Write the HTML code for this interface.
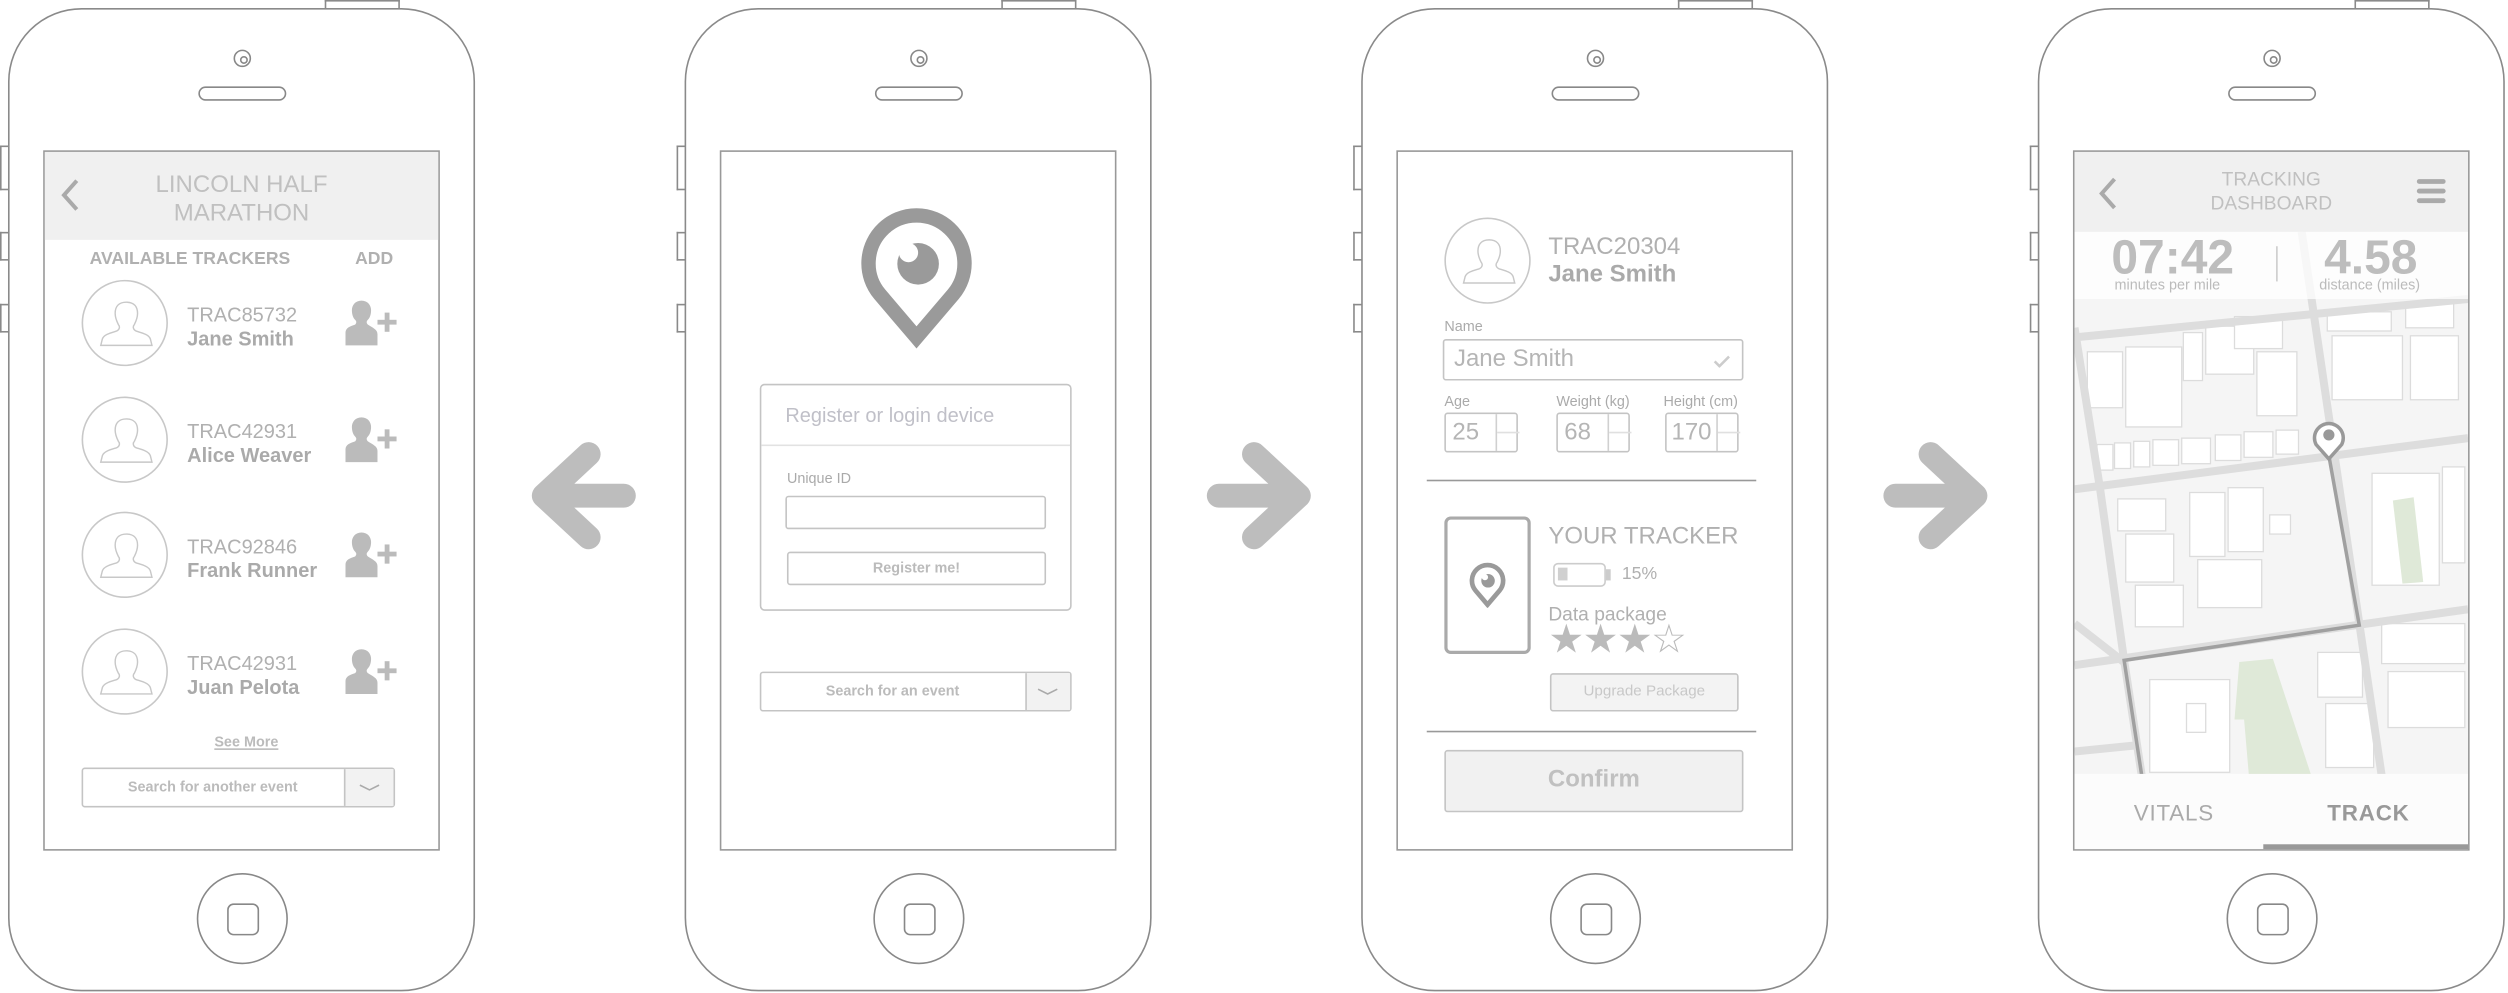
<!DOCTYPE html>
<html><head><meta charset="utf-8"><style>
*{margin:0;padding:0;box-sizing:border-box}
body{width:2508px;height:993px;overflow:hidden;background:#fff;font-family:"Liberation Sans",Arial,sans-serif}
#w{position:absolute;left:0;top:0;width:1568px;height:621px;transform:scale(1.5995,1.599);transform-origin:0 0}
.a{position:absolute}
.ph{position:absolute;top:0;width:300px;height:621px}
.body{position:absolute;left:5px;top:5px;width:292px;height:615px;border:1.5px solid #8a8a8a;border-radius:46px;background:#fff}
.sb{position:absolute;left:0;width:6px;border:1.2px solid #8a8a8a;border-right:none;background:#fff}
.tb{position:absolute;left:203px;top:0;width:47px;height:6px;border:1.2px solid #8a8a8a;border-bottom:none}
.cam{position:absolute;left:146px;top:31px;width:11px;height:11px;border:1.3px solid #888;border-radius:50%}
.cam:after{content:"";position:absolute;left:2.5px;top:2.5px;width:3.5px;height:3.5px;border:1.2px solid #888;border-radius:50%}
.spk{position:absolute;left:124px;top:54px;width:55px;height:9px;border:1.3px solid #888;border-radius:5px}
.home{position:absolute;left:123px;top:546px;width:57px;height:57px;border:1.5px solid #888;border-radius:50%}
.home:after{content:"";position:absolute;left:18px;top:18px;width:18px;height:18px;border:1.5px solid #888;border-radius:4px}
.scr{position:absolute;left:27px;top:94px;width:248px;height:438px;border:1.8px solid #999;background:#fff;overflow:hidden}
.g{color:#b5b5b5}
.av{position:absolute;width:54px;height:54px;border:1px solid #c8c8c8;border-radius:50%}
.box{position:absolute;border:1px solid #c4c4c4;border-radius:2px}
.spin{position:absolute;left:31px;top:0;width:14px;height:23px;border-left:1px solid #d0d0d0}
.spin:before{content:"";position:absolute;top:11px;left:0;width:14px;border-top:1px solid #e0e0e0}
</style></head><body><div id="w">

<svg width="0" height="0" style="position:absolute"><defs>
<symbol id="person" viewBox="0 0 54 54"><path d="M27 13c-5 0-7 3-7 7 0 3 1 5 2 7 1 1 1 3-1 4-3 1-8 2-9 5l-1 4h32l-1-4c-1-3-6-4-9-5-2-1-2-3-1-4 1-2 2-4 2-7 0-4-2-7-7-7z" fill="none" stroke="#c8c8c8" stroke-width="0.9"/></symbol>
<symbol id="adduser" viewBox="0 0 32 30"><path d="M10 1c-4 0-6 3-6 6 0 3 1 5 2 6 1 1 1 2 0 3-3 1-6 2-6 5v8h20v-7c0-3-3-4-6-6-1-1-1-2 0-3 1-1 2-3 2-6 0-3-2-6-6-6z" fill="#bbb"/><rect x="20" y="13" width="12" height="3" fill="#bbb"/><rect x="24.5" y="8.5" width="3" height="12" fill="#bbb"/></symbol>
<symbol id="pin" viewBox="0 0 80 90"><path d="M40 84 L17 57 A30 30 0 1 1 63 57 Z" fill="none" stroke="#9a9a9a" stroke-width="9" stroke-linejoin="miter"/><circle cx="41" cy="38" r="13" fill="#9a9a9a"/><circle cx="35" cy="31" r="6" fill="#fff"/></symbol>
</defs></svg>

<!-- arrows -->
<svg class="a" style="left:330px;top:276px" width="68" height="68" viewBox="0 0 68 68"><path d="M60 34H14M38 8L10 34L38 60" fill="none" stroke="#bdbdbd" stroke-width="15" stroke-linecap="round" stroke-linejoin="round"/></svg>
<svg class="a" style="left:754px;top:276px" width="68" height="68" viewBox="0 0 68 68"><path d="M8 34H54M30 8L58 34L30 60" fill="none" stroke="#bdbdbd" stroke-width="15" stroke-linecap="round" stroke-linejoin="round"/></svg>
<svg class="a" style="left:1177px;top:276px" width="68" height="68" viewBox="0 0 68 68"><path d="M8 34H54M30 8L58 34L30 60" fill="none" stroke="#bdbdbd" stroke-width="15" stroke-linecap="round" stroke-linejoin="round"/></svg>

<!-- PHONE 1 -->
<div class="ph" style="left:0">
<div class="tb"></div><div class="sb" style="top:91px;height:28px"></div><div class="sb" style="top:145px;height:18px"></div><div class="sb" style="top:190px;height:18px"></div>
<div class="body"></div><div class="cam"></div><div class="spk"></div><div class="home"></div>
<div class="scr">
 <div class="a" style="left:0;top:0;width:246px;height:55px;background:#f0f0f0"></div>
 <svg class="a" style="left:9px;top:16px" width="14" height="22"><path d="M11 2L3 11L11 20" fill="none" stroke="#aaa" stroke-width="2.5"/></svg>
 <div class="a g" style="left:0;width:246px;top:12px;text-align:center;font-size:15px;line-height:18px;color:#c0c0c0">LINCOLN HALF<br>MARATHON</div>
 <div class="a" style="left:28px;top:61px;font-size:11px;font-weight:bold;color:#b0b0b0">AVAILABLE TRACKERS</div>
 <div class="a" style="left:194px;top:61px;font-size:11px;font-weight:bold;color:#b0b0b0">ADD</div>
 <div class="a" style="top:80px;left:0;width:246px;height:60px">
  <div class="av" style="left:23px;top:0"><svg width="54" height="54"><use href="#person"/></svg></div>
  <div class="a" style="left:89px;top:15px;font-size:12.5px;color:#b0b0b0">TRAC85732</div>
  <div class="a" style="left:89px;top:30px;font-size:12.5px;font-weight:bold;color:#aaa">Jane Smith</div>
  <svg class="a" style="left:188px;top:12px" width="32" height="30"><use href="#adduser"/></svg></div>
 <div class="a" style="top:153px;left:0;width:246px;height:60px">
  <div class="av" style="left:23px;top:0"><svg width="54" height="54"><use href="#person"/></svg></div>
  <div class="a" style="left:89px;top:15px;font-size:12.5px;color:#b0b0b0">TRAC42931</div>
  <div class="a" style="left:89px;top:30px;font-size:12.5px;font-weight:bold;color:#aaa">Alice Weaver</div>
  <svg class="a" style="left:188px;top:12px" width="32" height="30"><use href="#adduser"/></svg></div>
 <div class="a" style="top:225px;left:0;width:246px;height:60px">
  <div class="av" style="left:23px;top:0"><svg width="54" height="54"><use href="#person"/></svg></div>
  <div class="a" style="left:89px;top:15px;font-size:12.5px;color:#b0b0b0">TRAC92846</div>
  <div class="a" style="left:89px;top:30px;font-size:12.5px;font-weight:bold;color:#aaa">Frank Runner</div>
  <svg class="a" style="left:188px;top:12px" width="32" height="30"><use href="#adduser"/></svg></div>
 <div class="a" style="top:298px;left:0;width:246px;height:60px">
  <div class="av" style="left:23px;top:0"><svg width="54" height="54"><use href="#person"/></svg></div>
  <div class="a" style="left:89px;top:15px;font-size:12.5px;color:#b0b0b0">TRAC42931</div>
  <div class="a" style="left:89px;top:30px;font-size:12.5px;font-weight:bold;color:#aaa">Juan Pelota</div>
  <svg class="a" style="left:188px;top:12px" width="32" height="30"><use href="#adduser"/></svg></div>
 <div class="a" style="left:106px;top:364px;font-size:9px;font-weight:bold;color:#bbb;text-decoration:underline">See More</div>
 <div class="box" style="left:23px;top:385px;width:196px;height:25px"></div>
 <div class="a" style="left:187px;top:386px;width:31px;height:23px;background:#f2f2f2;border-left:1px solid #c4c4c4"></div>
 <svg class="a" style="left:196px;top:394px" width="14" height="8"><path d="M1 2L7 5L13 2" fill="none" stroke="#aaa" stroke-width="1"/></svg>
 <div class="a" style="left:23px;width:164px;top:392px;text-align:center;font-size:9px;font-weight:bold;color:#bbb">Search for another event</div>
</div></div>

<!-- PHONE 2 -->
<div class="ph" style="left:423px">
<div class="tb"></div><div class="sb" style="top:91px;height:28px"></div><div class="sb" style="top:145px;height:18px"></div><div class="sb" style="top:190px;height:18px"></div>
<div class="body"></div><div class="cam"></div><div class="spk"></div><div class="home"></div>
<div class="scr">
 <svg class="a" style="left:82px;top:31px" width="80" height="92"><use href="#pin"/></svg>
 <div class="box" style="left:24px;top:145px;width:195px;height:142px;border-radius:3px"></div>
 <div class="a" style="left:25px;top:183px;width:193px;border-top:1px solid #e2e2e2"></div>
 <div class="a" style="left:40px;top:158px;font-size:12.5px;color:#c0c0c8">Register or login device</div>
 <div class="a" style="left:41px;top:199px;font-size:9px;color:#aaa">Unique ID</div>
 <div class="box" style="left:40px;top:215px;width:163px;height:21px"></div>
 <div class="box" style="left:41px;top:250px;width:162px;height:21px"></div>
 <div class="a" style="left:41px;width:162px;top:255px;text-align:center;font-size:9px;font-weight:bold;color:#bbb">Register me!</div>
 <div class="box" style="left:24px;top:325px;width:195px;height:25px"></div>
 <div class="a" style="left:190px;top:326px;width:28px;height:23px;background:#f2f2f2;border-left:1px solid #c4c4c4"></div>
 <svg class="a" style="left:197px;top:334px" width="14" height="8"><path d="M1 2L7 5L13 2" fill="none" stroke="#aaa" stroke-width="1"/></svg>
 <div class="a" style="left:24px;width:166px;top:332px;text-align:center;font-size:9px;font-weight:bold;color:#bbb">Search for an event</div>
</div></div>

<!-- PHONE 3 -->
<div class="ph" style="left:846px">
<div class="tb"></div><div class="sb" style="top:91px;height:28px"></div><div class="sb" style="top:145px;height:18px"></div><div class="sb" style="top:190px;height:18px"></div>
<div class="body"></div><div class="cam"></div><div class="spk"></div><div class="home"></div>
<div class="scr">
 <div class="av" style="left:29px;top:41px"><svg width="54" height="54"><use href="#person"/></svg></div>
 <div class="a" style="left:94px;top:51px;font-size:15px;color:#b0b0b0">TRAC20304</div>
 <div class="a" style="left:94px;top:68px;font-size:15px;font-weight:bold;color:#aaa">Jane Smith</div>
 <div class="a" style="left:29px;top:104px;font-size:9px;color:#aaa">Name</div>
 <div class="box" style="left:28px;top:117px;width:188px;height:26px"></div>
 <div class="a" style="left:35px;top:121px;font-size:15px;color:#b5b5b5">Jane Smith</div>
 <svg class="a" style="left:197px;top:126px" width="11" height="9"><path d="M1 5L4 8L10 2" fill="none" stroke="#ccc" stroke-width="1.6"/></svg>
 <div class="a" style="left:29px;top:151px;font-size:9px;color:#aaa">Age</div>
 <div class="a" style="left:99px;top:151px;font-size:9px;color:#aaa">Weight (kg)</div>
 <div class="a" style="left:166px;top:151px;font-size:9px;color:#aaa">Height (cm)</div>
 <div class="box" style="left:29px;top:163px;width:46px;height:25px"><div class="a" style="left:4px;top:3px;font-size:15px;color:#b5b5b5">25</div><div class="spin"></div></div>
 <div class="box" style="left:99px;top:163px;width:46px;height:25px"><div class="a" style="left:4px;top:3px;font-size:15px;color:#b5b5b5">68</div><div class="spin"></div></div>
 <div class="box" style="left:167px;top:163px;width:46px;height:25px"><div class="a" style="left:3px;top:3px;font-size:15px;color:#b5b5b5">170</div><div class="spin"></div></div>
 <div class="a" style="left:18px;top:205px;width:206px;border-top:1px solid #999"></div>
 <div class="a" style="left:29px;top:228px;width:54px;height:86px;border:2px solid #aaa;border-radius:4px"></div>
 <svg class="a" style="left:43px;top:255px" width="26" height="31" viewBox="0 0 80 90"><use href="#pin"/></svg>
 <div class="a" style="left:94px;top:232px;font-size:15px;color:#b0b0b0">YOUR TRACKER</div>
 <div class="a" style="left:97px;top:257px;width:33px;height:15px;border:1.5px solid #ccc;border-radius:3px"><div style="position:absolute;left:2px;top:2px;width:6px;height:8px;background:#d0d0d0"></div></div>
 <div class="a" style="left:130px;top:261px;width:3px;height:7px;background:#ccc"></div>
 <div class="a" style="left:140px;top:258px;font-size:11px;color:#b0b0b0">15%</div>
 <div class="a" style="left:94px;top:282px;font-size:12px;color:#b0b0b0">Data package</div>
 <div class="a" style="left:94px;top:292px;font-size:25px;line-height:26px;color:#bbb;letter-spacing:-1px">★★★☆</div>
 <div class="box" style="left:95px;top:326px;width:118px;height:24px;background:#f3f3f3"></div>
 <div class="a" style="left:95px;width:118px;top:332px;text-align:center;font-size:9.5px;color:#c8c8c8">Upgrade Package</div>
 <div class="a" style="left:18px;top:362px;width:206px;border-top:1px solid #999"></div>
 <div class="box" style="left:29px;top:374px;width:187px;height:39px;background:#f1f1f1"></div>
 <div class="a" style="left:29px;width:187px;top:384px;text-align:center;font-size:15px;font-weight:bold;color:#c0c0c0">Confirm</div>
</div></div>

<!-- PHONE 4 -->
<div class="ph" style="left:1269px">
<div class="tb"></div><div class="sb" style="top:91px;height:28px"></div><div class="sb" style="top:145px;height:18px"></div><div class="sb" style="top:190px;height:18px"></div>
<div class="body"></div><div class="cam"></div><div class="spk"></div><div class="home"></div>
<div class="scr">
 <svg class="a" style="left:0;top:50px" width="246" height="340" viewBox="1298 145 246 340">
  <rect x="1298" y="145" width="246" height="340" fill="#f5f5f5"/>
  <g fill="#fff" stroke="#dcdcdc" stroke-width="0.8">
   <rect x="1306" y="220" width="22" height="35"/><rect x="1330" y="217" width="35" height="50"/><rect x="1366" y="208" width="12" height="30"/><rect x="1380" y="204" width="30" height="30"/><rect x="1398" y="198" width="30" height="20"/><rect x="1412" y="220" width="25" height="40"/>
   <rect x="1312" y="278" width="10" height="16"/><rect x="1323" y="277" width="10" height="16"/><rect x="1335" y="276" width="10" height="16"/><rect x="1347" y="275" width="16" height="16"/><rect x="1365" y="274" width="18" height="16"/><rect x="1386" y="272" width="16" height="16"/><rect x="1404" y="270" width="18" height="16"/><rect x="1424" y="269" width="14" height="15"/>
   <rect x="1325" y="312" width="30" height="20"/><rect x="1330" y="334" width="30" height="30"/><rect x="1336" y="366" width="30" height="26"/><rect x="1370" y="308" width="22" height="40"/><rect x="1394" y="305" width="22" height="40"/><rect x="1375" y="350" width="40" height="30"/><rect x="1420" y="322" width="13" height="12"/>
   <rect x="1456" y="195" width="40" height="12"/><rect x="1459" y="210" width="44" height="40"/><rect x="1505" y="190" width="30" height="15"/><rect x="1508" y="210" width="30" height="40"/>
   <rect x="1484" y="296" width="42" height="70"/><rect x="1528" y="292" width="14" height="60"/>
   <rect x="1490" y="390" width="52" height="25"/><rect x="1494" y="420" width="48" height="35"/><rect x="1450" y="408" width="28" height="28"/><rect x="1455" y="440" width="30" height="40"/>
   <rect x="1345" y="425" width="50" height="58"/><rect x="1368" y="440" width="12" height="18"/>
  </g>
  <path d="M1401 414L1422 412L1446 485L1407 485L1404 450L1398 450Z" fill="#dfe9d8"/>
  <path d="M1497 313L1510 311L1516 364L1503 365Z" fill="#dfe9d8"/>
  <g stroke="#dddddd" stroke-width="5" fill="none">
   <path d="M1298 211L1544 187"/><path d="M1298 306L1544 274"/><path d="M1298 416L1544 381"/><path d="M1298 470L1338 466"/><path d="M1298 390L1330 415"/>
   <path d="M1440 145L1490 485"/><path d="M1298 205L1314 306L1329 413L1340 485"/>
  </g>
  <path d="M1457 285L1476 391L1329 413L1340 485" fill="none" stroke="#a0a0a0" stroke-width="2.2"/>
  <path d="M1457 287L1449 278A9 9 0 1 1 1465 278Z" fill="#fff" stroke="#999" stroke-width="2.2"/>
  <circle cx="1457" cy="272" r="3.5" fill="#999"/>
 </svg>
 <div class="a" style="left:0;top:50px;width:246px;height:42px;background:rgba(255,255,255,0.75)"></div>
 <div class="a" style="left:0;top:0;width:246px;height:50px;background:#f0f0f0"></div>
 <svg class="a" style="left:14px;top:15px" width="14" height="22"><path d="M11 2L3 11L11 20" fill="none" stroke="#aaa" stroke-width="2.5"/></svg>
 <div class="a" style="left:0;width:246px;top:10px;text-align:center;font-size:12px;line-height:15px;color:#c0c0c0">TRACKING<br>DASHBOARD</div>
 <div class="a" style="left:214px;top:17px;width:18px;height:3px;background:#aaa;border-radius:2px;box-shadow:0 6px 0 #aaa,0 12px 0 #aaa"></div>
 <div class="a" style="left:23px;top:52px;font-size:30px;font-weight:bold;color:#bdbdbd;line-height:30px">07:42</div>
 <div class="a" style="left:25px;top:78px;font-size:9px;color:#bbb">minutes per mile</div>
 <div class="a" style="left:126px;top:59px;height:22px;border-left:1px solid #ccc"></div>
 <div class="a" style="left:156px;top:52px;font-size:30px;font-weight:bold;color:#bdbdbd;line-height:30px">4.58</div>
 <div class="a" style="left:153px;top:78px;font-size:9px;color:#bbb">distance (miles)</div>
 <div class="a" style="left:0;top:389px;width:246px;height:48px;background:#fcfcfc"></div>
 <div class="a" style="left:37px;top:405px;font-size:14px;color:#aaa;letter-spacing:0.5px">VITALS</div>
 <div class="a" style="left:158px;top:405px;font-size:14px;font-weight:bold;color:#999;letter-spacing:0.5px">TRACK</div>
 <div class="a" style="left:118px;top:433px;width:128px;height:4px;background:#999"></div>
</div></div>

</div></body></html>
